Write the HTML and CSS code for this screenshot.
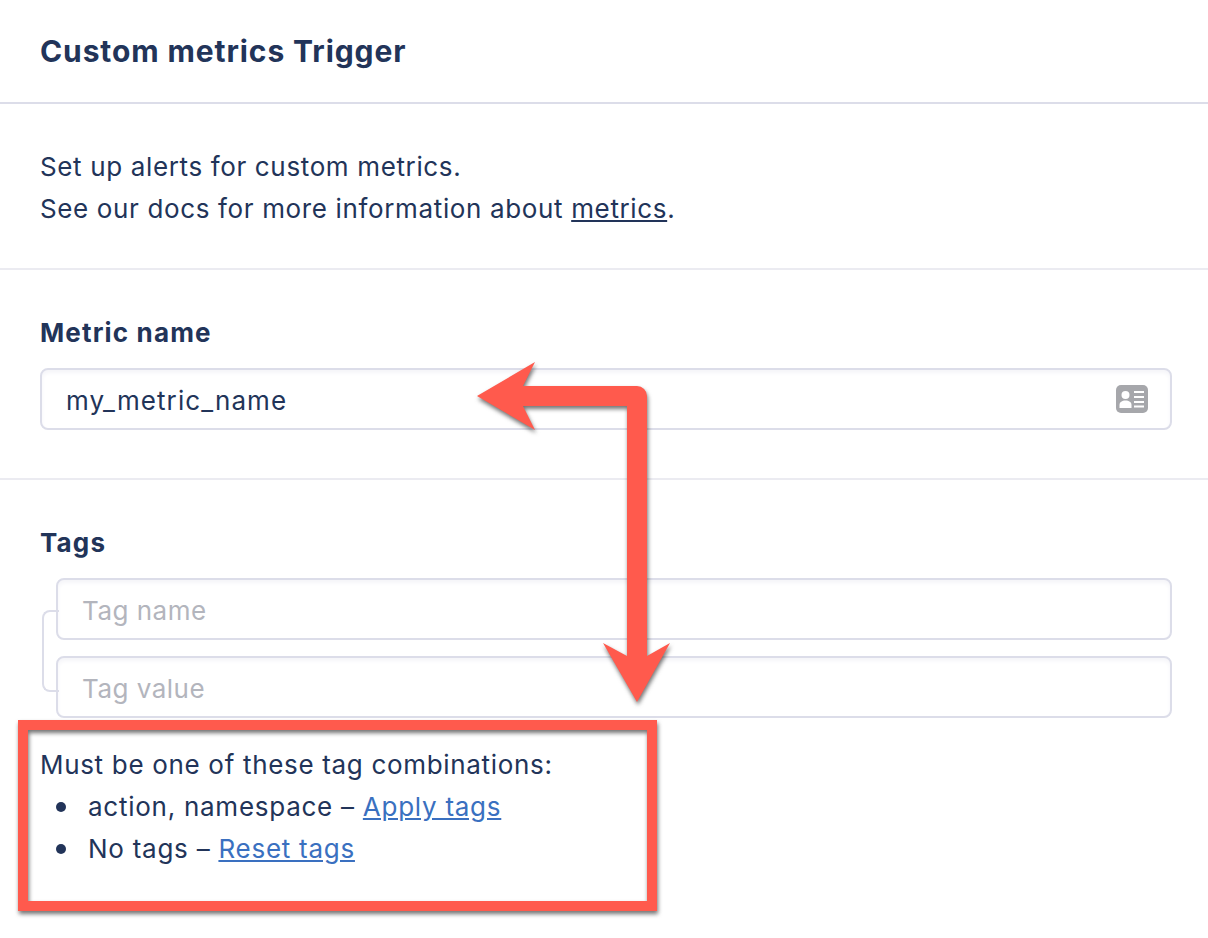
FILE: index.html
```html
<!DOCTYPE html>
<html lang="en">
<head>
	<meta charset="UTF-8">
	<title>Custom metrics Trigger</title>
	<link rel="stylesheet" href="styles.css">
</head>
<body>
	<div class="panel">
		<div class="panel-head">
			<h1>Custom metrics Trigger</h1>
		</div>
		<div class="intro">
			<p>Set up alerts for custom metrics.</p>
			<p>See our docs for more information about <a class="dark-link" href="#">metrics</a>.</p>
		</div>
		<div class="metric">
			<label class="field-label">Metric name</label>
			<div class="field">
				<input class="field-input" type="text" value="my_metric_name">
				<svg class="card-icon" width="32" height="28" viewBox="0 0 32 28">
					<rect x="0" y="0" width="32" height="28" rx="5" fill="#a6a7ab"/>
					<circle cx="9.5" cy="10" r="4" fill="#fff"/>
					<path d="M3.5 23v-3c0-3 2.500-4.500 6-4.500s6 1.500 6 4.500v3z" fill="#fff"/>
					<path d="M18 7h10M18 12h10M18 17h10M18 21.500h10" stroke="#fff" stroke-width="2"/>
				</svg>
			</div>
		</div>
		<div class="tags">
			<label class="field-label">Tags</label>
			<div class="tag-fields">
				<div class="field"><input class="field-input" type="text" placeholder="Tag name"></div>
				<div class="field"><input class="field-input" type="text" placeholder="Tag value"></div>
			</div>
			<div class="combos">
				<p>Must be one of these tag combinations:</p>
				<ul>
					<li>action, namespace – <a href="#">Apply tags</a></li>
					<li>No tags – <a href="#">Reset tags</a></li>
				</ul>
			</div>
		</div>
	</div>

	<!-- annotation drawn over the screenshot -->
	<svg class="markup" width="1208" height="938" viewBox="0 0 1208 938">
		<path d="M477 396L535 362L523 386H637a10 10 0 0 1 10 10V656L670 643L637 702L603 643L627 656V406H523L535 430Z" fill="#ff5a4d"/>
		<rect x="23" y="725" width="629" height="181" fill="none" stroke="#ff5a4d" stroke-width="10"/>
	</svg>
</body>
</html>
```

FILE: styles.css
```css
* {
	box-sizing: border-box;
}

body {
	margin: 0;
	background: #fff;
	color: #223459;
	font-family: "Inter", "Liberation Sans", sans-serif;
	font-size: 26px;
	line-height: 42px;
	letter-spacing: 0.64px;
}

p {
	margin: 0;
}

.panel {
	width: 1208px;
}

.panel-head {
	height: 104px;
	padding: 30px 40px 0;
	border-bottom: 2px solid #dcdde9;
}

.panel-head h1 {
	margin: 0;
	font-size: 30px;
	font-weight: 700;
	line-height: 42px;
	letter-spacing: 0.9px;
}

.intro {
	height: 166px;
	padding: 42px 40px 0;
	border-bottom: 2px solid #ebebf1;
}

.dark-link {
	color: #223459;
}

.metric {
	height: 210px;
	padding: 42px 36px 0 40px;
	border-bottom: 2px solid #ebebf1;
}

.field-label {
	display: block;
	font-weight: 700;
	letter-spacing: 1.15px;
	margin-bottom: 14px;
}

.field {
	display: flex;
	align-items: center;
	height: 62px;
	padding-right: 22px;
	border: 2px solid #dcdde9;
	border-radius: 8px;
	box-shadow: inset 0 3px 4px #f5f5f9;
}

.field-input {
	flex: 1;
	min-width: 0;
	height: 100%;
	padding: 3px 0 0 24px;
	border: 0;
	outline: 0;
	background: transparent;
	color: #223459;
	font-family: inherit;
	font-size: 26px;
	letter-spacing: 1.08px;
}

.field-input::placeholder {
	color: #b3b5bd;
	letter-spacing: 0.5px;
	opacity: 1;
}

.card-icon {
	flex: none;
}

.tags {
	padding: 42px 36px 0 40px;
}

.tag-fields {
	position: relative;
	display: flex;
	flex-direction: column;
	gap: 16px;
	padding-left: 16px;
}

.tag-fields::before {
	content: "";
	position: absolute;
	left: 2px;
	top: 32px;
	width: 15px;
	height: 78px;
	border: 2px solid #dcdde9;
	border-right: 0;
	border-radius: 8px 0 0 8px;
}

.combos {
	margin-top: 26px;
	letter-spacing: 0.68px;
}

.combos ul {
	margin: 0;
	padding: 0 0 0 16px;
	list-style: none;
	letter-spacing: 0.74px;
}

.combos li::before {
	content: "";
	display: inline-block;
	width: 10px;
	height: 10px;
	margin-right: 22px;
	border-radius: 50%;
	background: #223459;
	vertical-align: 4px;
}

.combos a {
	color: #3a70c0;
}

.markup {
	position: absolute;
	left: 0;
	top: 0;
	filter: drop-shadow(1px 3px 2px rgba(40, 40, 40, 0.65));
	pointer-events: none;
}
```
